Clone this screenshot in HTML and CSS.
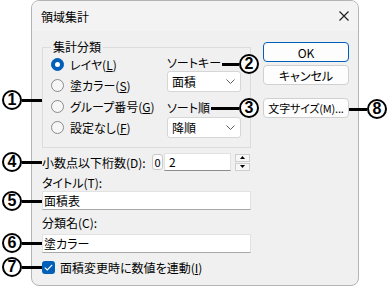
FILE: index.html
```html
<!DOCTYPE html>
<html lang="ja">
<head>
<meta charset="UTF-8">
<meta name="viewport" content="width=device-width, initial-scale=1.0">
<title>領域集計</title>
<link rel="stylesheet" href="styles.css">
</head>
<body>

<div class="page">
    <div class="dialog">
        <div class="titlebar">
            <span>領域集計</span>
            <svg class="close" width="10" height="10" viewBox="0 0 10 10"><path d="M0.5 0.5L9.5 9.5M9.5 0.5L0.5 9.5" stroke="#1a1a1a" stroke-width="1.1" fill="none"/></svg>
        </div>

        <div class="content">
            <div class="main">
                <fieldset class="group">
                    <legend>集計分類</legend>
                    <div class="group-body">
                        <div class="radios">
                            <div class="radio-row"><span class="radio on"></span><span>レイヤ(<u>L</u>)</span></div>
                            <div class="radio-row"><span class="radio"></span><span>塗カラー(<u>S</u>)</span></div>
                            <div class="radio-row"><span class="radio"></span><span>グループ番号(<u>G</u>)</span></div>
                            <div class="radio-row"><span class="radio"></span><span>設定なし(<u>F</u>)</span></div>
                        </div>
                        <div class="sort">
                            <div class="sort-label">ソートキー</div>
                            <div class="select">面積<svg width="9" height="5" viewBox="0 0 9 5"><polyline points="0.5,0.5 4.5,4.5 8.5,0.5" stroke="#5f5f5f" fill="none"/></svg></div>
                            <div class="sort-label second">ソート順</div>
                            <div class="select low">降順<svg width="9" height="5" viewBox="0 0 9 5"><polyline points="0.5,0.5 4.5,4.5 8.5,0.5" stroke="#5f5f5f" fill="none"/></svg></div>
                        </div>
                    </div>
                </fieldset>

                <div class="digits">
                    <span class="digits-label">小数点以下桁数(D):</span>
                    <span class="zero">0</span>
                    <span class="num-field">2</span>
                    <span class="spin">
                        <span class="spin-btn"><svg width="5" height="3" viewBox="0 0 5 3"><polygon points="2.5,0 5,3 0,3" fill="#000"/></svg></span>
                        <span class="spin-btn"><svg width="5" height="3" viewBox="0 0 5 3"><polygon points="0,0 5,0 2.5,3" fill="#000"/></svg></span>
                    </span>
                </div>

                <div class="cap">タイトル(T):</div>
                <div class="field">面積表</div>

                <div class="cap second">分類名(C):</div>
                <div class="field low">塗カラー</div>

                <div class="check-row">
                    <span class="check"><svg width="9" height="7" viewBox="0 0 9 7"><polyline points="0.8,3.6 3.3,6 8.2,0.8" stroke="#fff" stroke-width="1.2" fill="none"/></svg></span>
                    <span>面積変更時に数値を連動(<u>I</u>)</span>
                </div>
            </div>

            <div class="side">
                <div class="btn default">OK</div>
                <div class="btn">キャンセル</div>
                <div class="btn font">文字サイズ(M)...</div>
            </div>
        </div>
    </div>

    <div class="co co1"><span class="num">1</span><span class="bar"></span></div>
    <div class="co co2"><span class="bar"></span><span class="num">2</span></div>
    <div class="co co3"><span class="bar"></span><span class="num">3</span></div>
    <div class="co co4"><span class="num">4</span><span class="bar"></span></div>
    <div class="co co5"><span class="num">5</span><span class="bar"></span></div>
    <div class="co co6"><span class="num">6</span><span class="bar"></span></div>
    <div class="co co7"><span class="num">7</span><span class="bar"></span></div>
    <div class="co co8"><span class="bar"></span><span class="num">8</span></div>
</div>

</body>
</html>
```

FILE: styles.css
```css
body {
    margin: 0;
    background: #fff;
    color: #000;
    font-family: "Noto Sans CJK JP", sans-serif;
    font-size: 12px;
    font-feature-settings: "palt";
}
u {
    text-decoration: underline;
    text-underline-offset: 1px;
}
.page {
    position: relative;
    width: 389px;
    height: 286px;
}
.dialog {
    margin-left: 31px;
    width: 328px;
    height: 286px;
    box-sizing: border-box;
    border: 1px solid #b4b4b4;
    border-radius: 8px;
    background: #f0f0f0;
    overflow: hidden;
}
.titlebar {
    height: 30px;
    display: flex;
    align-items: center;
    justify-content: space-between;
    padding: 0 9px;
    background: #f3f3f3;
}
.content {
    display: flex;
    gap: 12px;
    padding: 9px 8px 0 10px;
}
.main {
    width: 209px;
}
.side {
    width: 86px;
    margin-top: 2px;
    display: flex;
    flex-direction: column;
}

/* group box */
.group {
    margin: 0;
    padding: 0 9px 9px 8px;
    border: 1px solid #dcdcdc;
    min-width: 0;
}
.group legend {
    padding: 0 2px;
    line-height: 14px;
}
.group-body {
    display: flex;
    justify-content: space-between;
}
.radio-row {
    height: 21px;
    display: flex;
    align-items: center;
    gap: 6px;
    white-space: nowrap;
}
.radio {
    width: 13px;
    height: 13px;
    box-sizing: border-box;
    border: 1px solid #8a8a8a;
    border-radius: 50%;
    background: #f6f6f6;
    display: flex;
    align-items: center;
    justify-content: center;
}
.radio.on {
    background: #005fb8;
    border-color: #005fb8;
}
.radio.on::after {
    content: "";
    width: 5px;
    height: 5px;
    border-radius: 50%;
    background: #fff;
}
.sort {
    width: 74px;
}
.sort-label {
    line-height: 14px;
    margin-top: 2px;
}
.sort-label.second {
    margin-top: 9px;
}
.select {
    margin-top: 1px;
    height: 21px;
    box-sizing: border-box;
    border: 1px solid #d6d6d6;
    border-radius: 3px;
    background: #fff;
    display: flex;
    align-items: center;
    justify-content: space-between;
    padding: 0 5px 0 4px;
}
.select.low {
    margin-top: 2px;
}

/* decimal digits */
.digits {
    margin-top: 5px;
    height: 18px;
    display: flex;
    align-items: center;
}
.digits-label {
    width: 110px;
    flex: none;
}
.zero {
    width: 11px;
    height: 16px;
    box-sizing: border-box;
    border: 1px solid #c9c9c9;
    border-radius: 3px;
    background: #fbfbfb;
    display: flex;
    align-items: center;
    justify-content: center;
    font-size: 11px;
}
.num-field {
    margin-left: 1px;
    width: 67px;
    height: 18px;
    box-sizing: border-box;
    border: 1px solid #e2e2e2;
    border-bottom-color: #8c8c8c;
    background: #fff;
    padding-left: 4px;
    line-height: 16px;
}
.spin {
    margin-left: 4px;
    width: 15px;
    height: 17px;
    display: flex;
    flex-direction: column;
    gap: 1px;
}
.spin-btn {
    flex: 1;
    box-sizing: border-box;
    border: 1px solid #cfcfcf;
    background: #f7f7f7;
    display: flex;
    align-items: center;
    justify-content: center;
}

/* text fields */
.cap {
    margin-top: 5px;
    line-height: 14px;
}
.cap.second {
    margin-top: 6px;
}
.field {
    margin-top: 1px;
    height: 19px;
    box-sizing: border-box;
    border: 1px solid #e2e2e2;
    border-bottom-color: #a8a8a8;
    background: #fff;
    padding-left: 1px;
    line-height: 17px;
}
.field.low {
    margin-top: 4px;
}
.check-row {
    margin-top: 7px;
    height: 14px;
    display: flex;
    align-items: center;
    gap: 5px;
    white-space: nowrap;
}
.check {
    width: 13px;
    height: 13px;
    border-radius: 3px;
    background: #005fb8;
    display: flex;
    align-items: center;
    justify-content: center;
}

/* buttons */
.btn {
    height: 20px;
    box-sizing: border-box;
    border: 1px solid #d0d0d0;
    border-radius: 4px;
    background: #fdfdfd;
    display: flex;
    align-items: center;
    justify-content: center;
    margin-bottom: 3px;
    white-space: nowrap;
}
.btn.default {
    border-color: #005fb8;
}
.btn.font {
    margin-top: 10px;
    font-size: 11px;
    letter-spacing: -0.2px;
}

/* callouts */
.co {
    position: absolute;
    height: 20px;
    display: flex;
    align-items: center;
}
.num {
    width: 20px;
    height: 20px;
    box-sizing: border-box;
    border: 2px solid #000;
    border-radius: 50%;
    display: flex;
    align-items: center;
    justify-content: center;
    font-family: "Liberation Sans", sans-serif;
    font-weight: bold;
    font-size: 16px;
    line-height: 1;
    background: #fff;
}
.bar {
    height: 3px;
    background: #000;
}
.co1 { left: 2px; top: 90px; }
.co1 .bar, .co4 .bar, .co5 .bar, .co6 .bar, .co7 .bar { width: 20px; }
.co2 { left: 222px; top: 54px; }
.co2 .bar { width: 17px; }
.co3 { left: 211px; top: 98px; }
.co3 .bar { width: 28px; }
.co4 { left: 2px; top: 152px; }
.co5 { left: 2px; top: 191px; }
.co6 { left: 2px; top: 233px; }
.co7 { left: 2px; top: 257px; }
.co8 { left: 349px; top: 99px; }
.co8 .bar { width: 18px; }
```
